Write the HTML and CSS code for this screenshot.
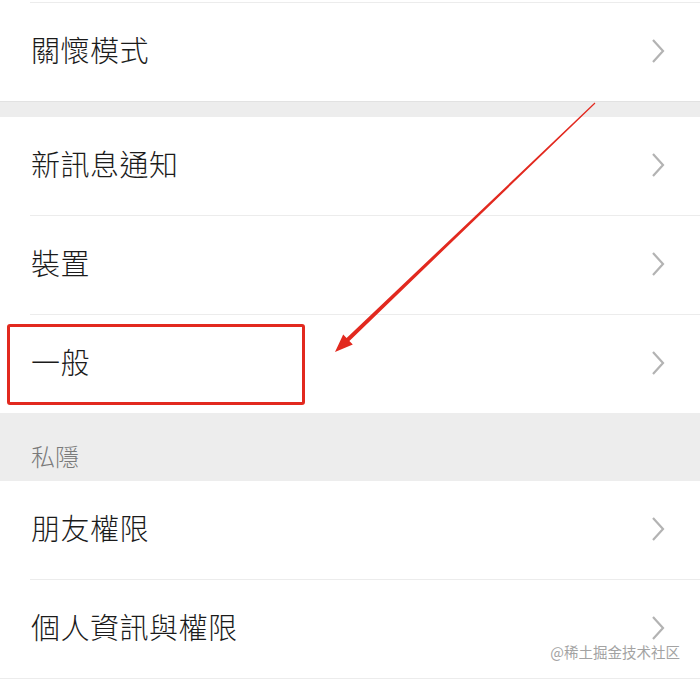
FILE: index.html
```html
<!DOCTYPE html>
<html lang="zh-Hant">
<head>
  <meta charset="UTF-8" />
  <meta name="viewport" content="width=device-width, initial-scale=1.0" />
  <title>設定</title>
  <link rel="stylesheet" href="styles.css">
</head>
<body>
  <div class="page">
    <div class="top-gap"></div>

    <ul class="group first">
      <li class="row"><span class="label">關懷模式</span><svg class="chevron" viewBox="0 0 14 26"><polyline points="2,2 12,13 2,24"/></svg></li>
    </ul>

    <div class="spacer"></div>

    <ul class="group">
      <li class="row"><span class="label">新訊息通知</span><svg class="chevron" viewBox="0 0 14 26"><polyline points="2,2 12,13 2,24"/></svg></li>
      <li class="row"><span class="label">裝置</span><svg class="chevron" viewBox="0 0 14 26"><polyline points="2,2 12,13 2,24"/></svg></li>
      <li class="row marked">
        <span class="label">一般</span><svg class="chevron" viewBox="0 0 14 26"><polyline points="2,2 12,13 2,24"/></svg>
        <!-- annotation box -->
        <span class="highlight"></span>
      </li>
    </ul>

    <div class="section-title">私隱</div>

    <ul class="group last">
      <li class="row"><span class="label">朋友權限</span><svg class="chevron" viewBox="0 0 14 26"><polyline points="2,2 12,13 2,24"/></svg></li>
      <li class="row"><span class="label">個人資訊與權限</span><svg class="chevron" viewBox="0 0 14 26"><polyline points="2,2 12,13 2,24"/></svg></li>
    </ul>

    <!-- annotation arrow drawn on top of the list -->
    <svg class="arrow" viewBox="0 0 700 679">
      <polygon points="594.6,102.6 595.4,103.4 349.4,341 352.8,344.6 335,352 343.2,334.4 346.6,338"/>
    </svg>

    <div class="watermark">@稀土掘金技术社区</div>
  </div>
</body>
</html>
```

FILE: styles.css
```css
:root {
  --text: #1b1b1b;
  --muted: #7a7a7a;
  --line: #ececec;
  --gray-bg: #ededed;
  --chevron: #b3b3b3;
  --mark: #e2291f;
}

* {
  margin: 0;
  padding: 0;
  box-sizing: border-box;
}

body {
  font-family: "Noto Sans CJK TC", "Noto Sans CJK SC", sans-serif;
  background: #fff;
  color: var(--text);
}

.page {
  position: relative;
  width: 700px;
  height: 679px;
  overflow: hidden;
}

.top-gap {
  height: 2px;
}

.group {
  list-style: none;
  background: #fff;
}

.group.first {
  border-top: 1px solid var(--line);
  margin-left: 30px;
}

.group.first .row {
  margin-left: -30px;
  height: 98px;
}

.row {
  position: relative;
  display: flex;
  align-items: center;
  justify-content: space-between;
  height: 98px;
  padding: 0 35px 0 31px;
}

.row + .row::before {
  content: "";
  position: absolute;
  top: -1px;
  left: 30px;
  right: 0;
  border-top: 1px solid var(--line);
}

.row + .row {
  margin-top: 1px;
}

.label {
  font-size: 29px;
  font-weight: 300;
  line-height: 1;
  letter-spacing: 0.5px;
  margin-bottom: 6px;
}

.chevron {
  width: 14px;
  height: 26px;
  margin-bottom: 2px;
  fill: none;
  stroke: var(--chevron);
  stroke-width: 2.2;
}

.spacer {
  height: 16px;
  background: var(--gray-bg);
  border-top: 1px solid #e2e2e2;
}

.section-title {
  height: 68px;
  background: var(--gray-bg);
  display: flex;
  align-items: flex-end;
  padding: 0 0 10px 31px;
  font-size: 24px;
  font-weight: 300;
  line-height: 30px;
  color: var(--muted);
}

.group.last {
  border-bottom: 1px solid var(--line);
}

.highlight {
  position: absolute;
  left: 7px;
  top: 9px;
  width: 298px;
  height: 81px;
  border: 3px solid var(--mark);
  border-radius: 3px;
}

.arrow {
  position: absolute;
  top: 0;
  left: 0;
  width: 700px;
  height: 679px;
  fill: var(--mark);
  pointer-events: none;
}

.watermark {
  position: absolute;
  right: 20px;
  bottom: 17px;
  font-family: "Noto Sans CJK SC", sans-serif;
  font-size: 14.5px;
  color: #a3a3a3;
}
```
